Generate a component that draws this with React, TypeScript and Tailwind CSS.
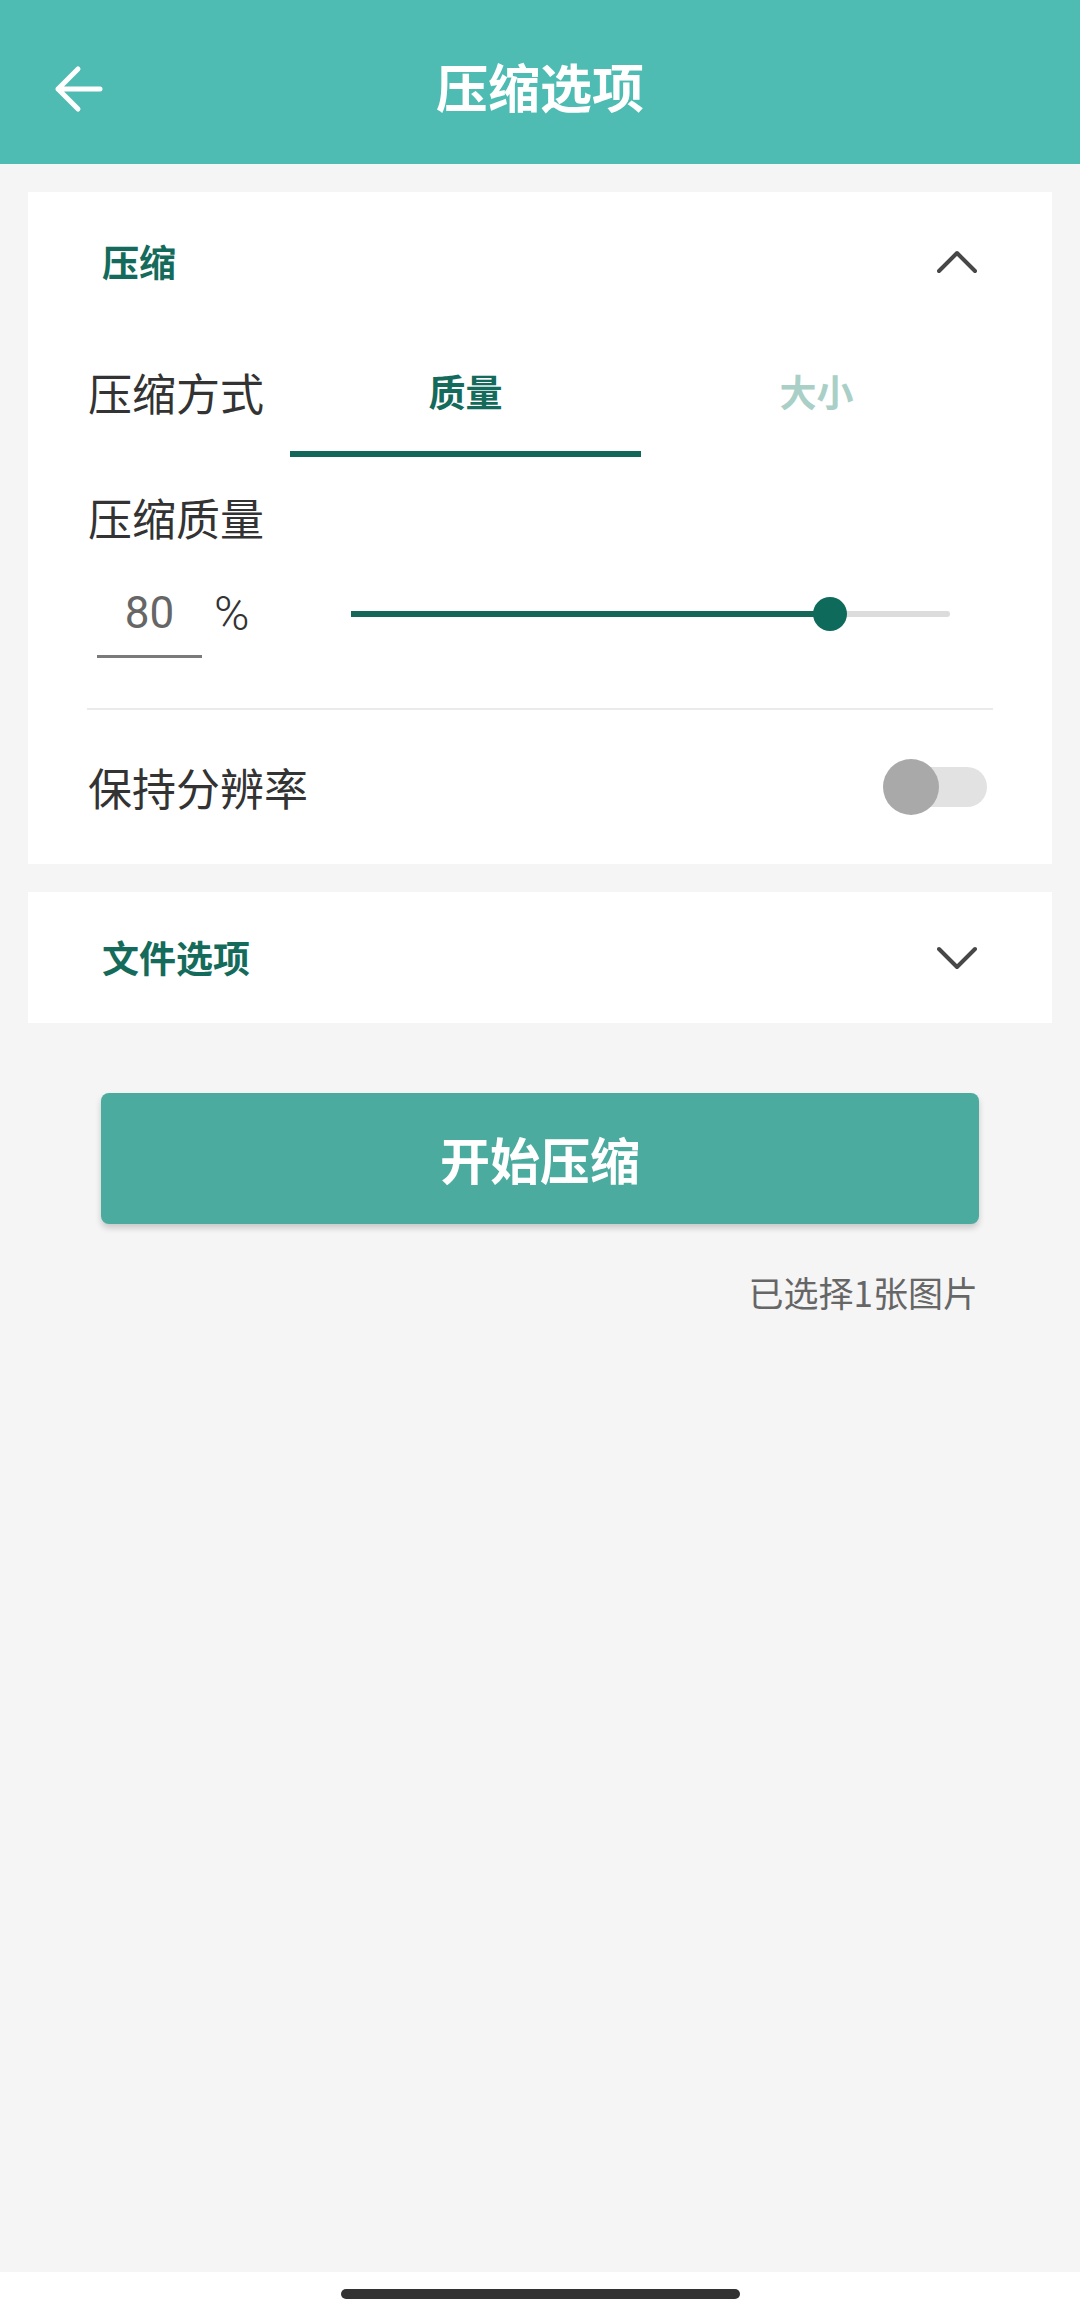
import { useState } from "react";

const cjk = "font-['Noto_Sans_CJK_SC','Noto_Sans',sans-serif]";

function ChevronIcon({ up }: { up: boolean }) {
  return (
    <svg width="40" height="24" viewBox="0 0 40 24" fill="none">
      <path
        d={up ? "M2 21 L20 3 L38 21" : "M2 3 L20 21 L38 3"}
        stroke="#474747"
        strokeWidth="4"
        strokeLinecap="round"
        strokeLinejoin="round"
      />
    </svg>
  );
}

export default function App() {
  const [tab, setTab] = useState(0);
  const quality = 80;

  return (
    <div className={`flex min-h-[2316px] w-[1080px] flex-col bg-[#f5f5f5] ${cjk}`}>
      {/* Top bar */}
      <header className="relative flex h-[164px] items-center justify-center bg-[#4ebcb2] pt-[8px]">
        <button className="absolute left-[52px] top-[64px] flex h-[50px] w-[52px] items-center justify-center">
          <svg width="50" height="48" viewBox="0 0 50 48" fill="none">
            <path
              d="M47 24 H5 M25 4 L5 24 L25 44"
              stroke="#ffffff"
              strokeWidth="5"
              strokeLinecap="round"
              strokeLinejoin="round"
            />
          </svg>
        </button>
        <h1 className="text-[52px] font-bold leading-none text-white">压缩选项</h1>
      </header>

      {/* Compression card */}
      <section className="mx-[28px] mt-[28px] bg-white">
        <div className="flex h-[140px] items-center justify-between pl-[74px] pr-[75px]">
          <span className="text-[37px] font-bold text-[#146b5b]">压缩</span>
          <ChevronIcon up />
        </div>

        <div className="flex h-[125px] pl-[60px]">
          <span className="flex w-[202px] items-center pb-[6px] text-[44px] text-[#333]">压缩方式</span>
          {["质量", "大小"].map((t, i) => (
            <button
              key={t}
              onClick={() => setTab(i)}
              className={`flex w-[351px] items-center justify-center border-b-[6px] text-[37px] font-bold ${
                tab === i
                  ? "border-[#13675a] text-[#146b5b]"
                  : "border-transparent text-[#a9cfc7]"
              }`}
            >
              {t}
            </button>
          ))}
        </div>

        <div className="mt-[30px] pl-[60px] text-[44px] leading-[60px] text-[#333]">压缩质量</div>

        <div className="mt-[23px] flex h-[88px] items-center pl-[69px] pr-[102px]">
          <div className="flex h-full w-[105px] items-center justify-center border-b-[3px] border-[#7a7a7a] font-['Roboto',sans-serif] text-[44px] text-[#666]">
            {quality}
          </div>
          <span className="ml-[12px] font-['Roboto',sans-serif] text-[48px] font-light text-[#333]">%</span>
          <div className="relative ml-[102px] h-[34px] flex-1">
            <div className="absolute left-0 right-0 top-[14px] h-[6px] rounded-full bg-[#dcdcdc]" />
            <div
              className="absolute left-0 top-[14px] h-[6px] bg-[#15675a]"
              style={{ width: `${quality}%` }}
            />
            <div
              className="absolute top-0 h-[34px] w-[34px] -translate-x-1/2 rounded-full bg-[#0e6b5b]"
              style={{ left: `${quality}%` }}
            />
          </div>
        </div>

        <div className="mx-[59px] mt-[50px] h-[2px] bg-[#ebebeb]" />

        <div className="flex h-[154px] items-center justify-between pl-[60px] pr-[65px]">
          <span className="text-[44px] text-[#333]">保持分辨率</span>
          <div className="relative h-[56px] w-[104px]">
            <div className="absolute right-0 top-[8px] h-[40px] w-[88px] rounded-full bg-[#e2e2e2]" />
            <div className="absolute left-0 top-0 h-[56px] w-[56px] rounded-full bg-[#a9a9a9]" />
          </div>
        </div>
      </section>

      {/* File options card */}
      <section className="mx-[28px] mt-[28px] flex h-[131px] items-center justify-between bg-white pl-[74px] pr-[75px]">
        <span className="text-[37px] font-bold text-[#146b5b]">文件选项</span>
        <ChevronIcon up={false} />
      </section>

      <button className="mx-[101px] mt-[70px] flex h-[131px] items-center justify-center rounded-[8px] bg-[#4bab9f] text-[50px] font-bold text-white shadow-[0_4px_6px_rgba(0,0,0,0.18)]">
        开始压缩
      </button>

      <p className="mr-[102px] mt-[43px] text-right text-[35px] leading-[50px] text-[#666]">已选择1张图片</p>

      <div className="flex-1" />

      {/* Gesture bar */}
      <div className="flex h-[44px] items-center justify-center bg-white">
        <div className="h-[10px] w-[399px] rounded-full bg-[#333]" />
      </div>
    </div>
  );
}
